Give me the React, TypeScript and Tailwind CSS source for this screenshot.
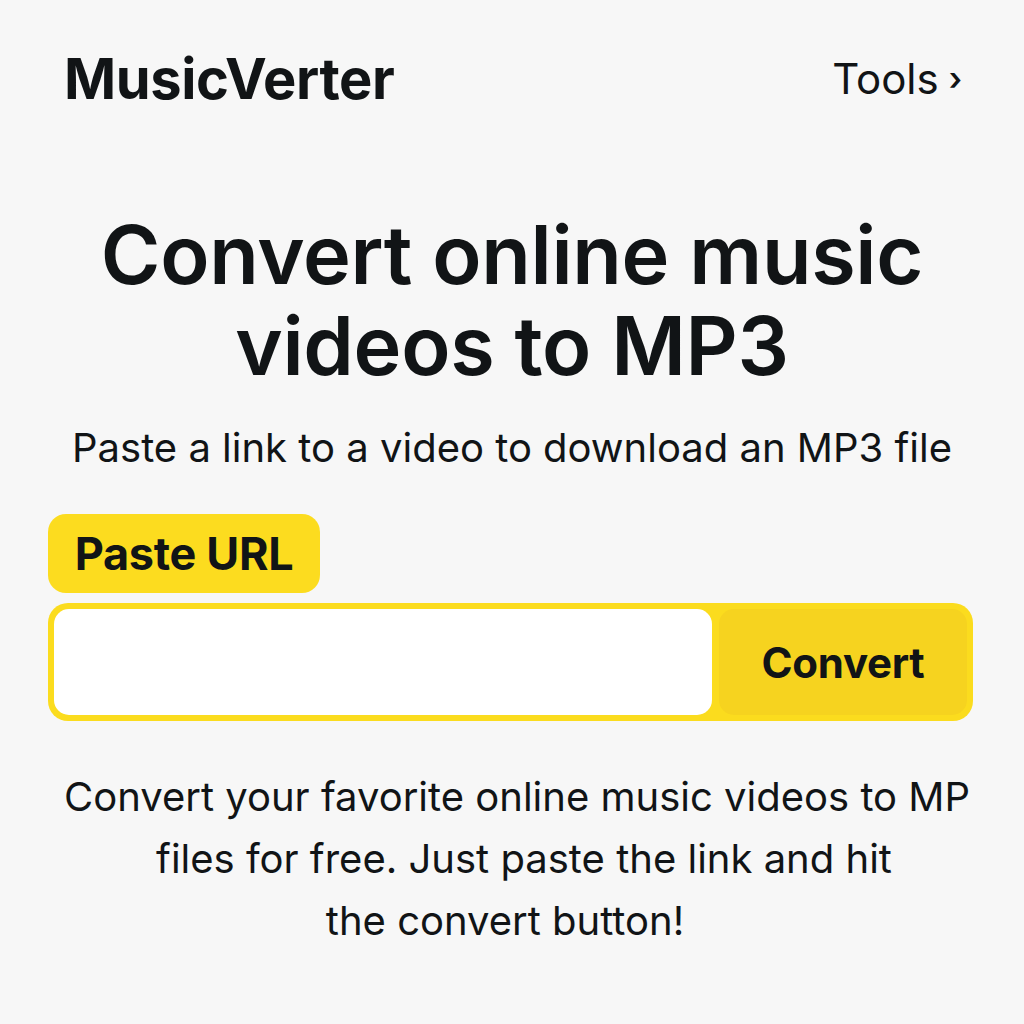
import React from "react";

export default function App() {
  return (
    <div
      className="w-[1024px] h-[1024px] bg-[#f7f7f7] text-[#111416] overflow-hidden"
      style={{ fontFamily: "Inter, 'Noto Sans', sans-serif" }}
    >
      <header className="flex items-center justify-between pl-[64px] pr-[62px] pt-[43px]">
        <div className="text-[56px] font-bold tracking-[-0.4px] leading-[72px]">MusicVerter</div>
        <div className="flex items-center gap-[10px] text-[42px] leading-[72px]">
          <span>Tools</span>
          <span className="text-[32px] font-semibold">›</span>
        </div>
      </header>

      <h1 className="mt-[95px] text-center text-[81px] font-semibold leading-[91px] tracking-[-0.3px]">
        Convert online music
        <br />
        videos to MP3
      </h1>

      <p className="mt-[30px] text-center text-[40px] leading-[52px]">
        Paste a link to a video to download an MP3 file
      </p>

      <div className="mt-[40px] pl-[48px] pr-[51px]">
        <div className="inline-flex h-[79px] w-[272px] items-center justify-center rounded-[18px] bg-[#fcdc1f] text-[45px] font-bold tracking-[-0.3px]">
          Paste URL
        </div>
        <div className="mt-[10px] flex h-[118px] gap-[7px] rounded-[20px] bg-[#fbdc1e] p-[6px]">
          <input
            className="h-full flex-1 rounded-[15px] bg-white outline-none"
            aria-label="URL"
          />
          <button className="flex w-[248px] items-center justify-center rounded-[15px] bg-[#f6d31f] text-[42px] font-bold tracking-[-0.3px]">
            Convert
          </button>
        </div>
      </div>

      <div className="mt-[45px] flex flex-col items-center text-[40px] leading-[62px]">
        <p className="pl-[10px]">Convert your favorite online music videos to MP</p>
        <p className="pl-[24px]">files for free. Just paste the link and hit</p>
        <p className="pr-[14px]">the convert button!</p>
      </div>
    </div>
  );
}
